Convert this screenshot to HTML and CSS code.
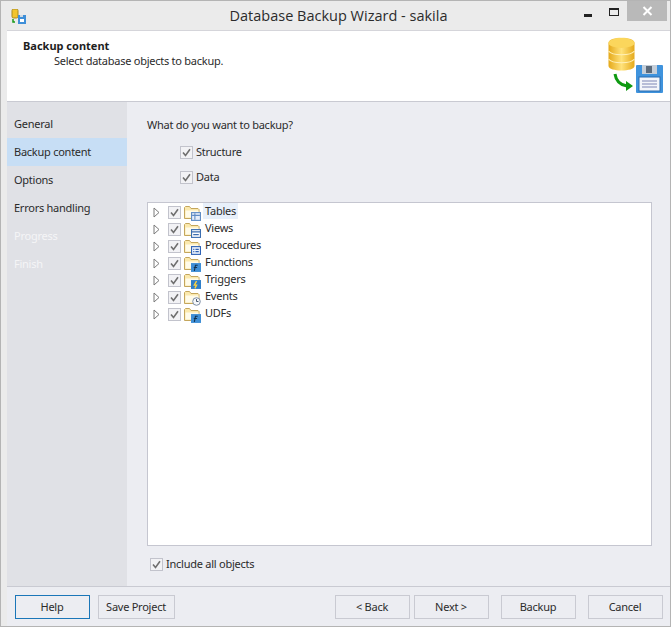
FILE: index.html
```html
<!doctype html>
<html lang="en">
  <head>
    <meta charset="UTF-8" />
    <title>Database Backup Wizard - sakila</title>
    <link rel="stylesheet" href="styles.css">
  </head>
  <body>
    <svg class="defs" width="0" height="0">
      <symbol id="folder" viewBox="0 0 16 16">
        <path d="M.5 13.5v-11l1-1h4l1.500 2h7l1 1v9z" fill="#fbe9ad" stroke="#c4a65c"/>
        <path d="M1.500 5.500h13v7h-13z" fill="#fffbe9"/>
      </symbol>
      <symbol id="check" viewBox="0 0 13 13">
        <rect x=".5" y=".5" width="12" height="12" fill="#f2f2f5" stroke="#c2c3cc"/>
        <path d="M3 6.500l2.500 3L10 3.200" fill="none" stroke="#6f6f6f" stroke-width="1.600"/>
      </symbol>
      <symbol id="arrow" viewBox="0 0 9 11">
        <path d="M2 1v9l5-4.500z" fill="#fff" stroke="#7a7a7a"/>
      </symbol>
    </svg>

    <div class="window">
      <div class="titlebar">
        <svg class="app-icon" width="16" height="16" viewBox="0 0 16 16">
          <rect x="1" y="0" width="6" height="9" rx="1.500" fill="#f2c42c" stroke="#a98a1e"/>
          <path d="M2 10v3h2" fill="none" stroke="#1a9a1a" stroke-width="1.500"/>
          <rect x="7" y="6" width="8" height="9" fill="#3f8fd8"/>
          <rect x="9" y="10" width="4" height="3" fill="#fff"/>
          <rect x="9" y="6" width="3" height="2" fill="#cfd8e0"/>
        </svg>
        <div class="title">Database Backup Wizard - sakila</div>
        <div class="win-buttons">
          <span class="win-min"></span>
          <span class="win-max"></span>
          <span class="win-close">
            <svg width="11" height="10" viewBox="0 0 11 10"><path d="M1.500 1l8 8M9.500 1l-8 8" stroke="#fff" stroke-width="2"/></svg>
          </span>
        </div>
      </div>

      <div class="frame">
        <header class="header">
          <div>
            <h1>Backup content</h1>
            <p>Select database objects to backup.</p>
          </div>
          <svg class="header-icon" width="58" height="58" viewBox="0 0 58 58">
            <defs>
              <linearGradient id="gold" x1="0" x2="1" y1="0" y2="0">
                <stop offset="0" stop-color="#e5a91a"/>
                <stop offset=".5" stop-color="#ffe27a"/>
                <stop offset="1" stop-color="#e5a91a"/>
              </linearGradient>
            </defs>
            <g transform="translate(1.500 0)">
              <path d="M0 6c0-7 26-7 26 0v23c0 6-26 6-26 0z" fill="url(#gold)"/>
              <ellipse cx="13" cy="6" rx="13" ry="5" fill="#fbd65c"/>
              <path d="M0 14c4 5 22 5 26 0M0 22c4 5 22 5 26 0" fill="none" stroke="#fff0b8" stroke-width="1.200"/>
            </g>
            <path d="M8 37c1 7 5 11 12 12" fill="none" stroke="#0f9a12" stroke-width="3"/>
            <path d="M19 44l7 5-7 5z" fill="#0f9a12"/>
            <rect x="29" y="28" width="27" height="28" rx="1" fill="#3f93dd"/>
            <rect x="35" y="28" width="15" height="9" fill="#c5ced8"/>
            <rect x="39" y="29" width="6" height="7" fill="#5c6a7a"/>
            <rect x="32" y="40" width="21" height="14" fill="#f3f5fa" stroke="#2a6db0"/>
            <path d="M35 44h15M35 47h15M35 50h15" stroke="#7d85b5"/>
          </svg>
        </header>

        <div class="body">
          <nav class="sidebar">
            <div class="nav-item">General</div>
            <div class="nav-item active">Backup content</div>
            <div class="nav-item">Options</div>
            <div class="nav-item">Errors handling</div>
            <div class="nav-item disabled">Progress</div>
            <div class="nav-item disabled">Finish</div>
          </nav>

          <main class="content">
            <div class="question">What do you want to backup?</div>
            <div class="options">
              <label class="check"><svg width="13" height="13"><use href="#check"/></svg><span>Structure</span></label>
              <label class="check"><svg width="13" height="13"><use href="#check"/></svg><span>Data</span></label>
            </div>

            <div class="tree">
              <div class="row">
                <svg class="exp" width="9" height="11"><use href="#arrow"/></svg>
                <svg width="13" height="13"><use href="#check"/></svg>
                <span class="node-icon">
                  <svg width="16" height="16"><use href="#folder"/></svg>
                  <svg class="badge" width="10" height="9" viewBox="0 0 9 8"><rect x=".5" y=".5" width="8" height="7" fill="#e6eefa" stroke="#5f8cc4"/><path d="M1 3h7M3.500 1v6" stroke="#5f8cc4"/></svg>
                </span>
                <span class="label selected">Tables</span>
              </div>
              <div class="row">
                <svg class="exp" width="9" height="11"><use href="#arrow"/></svg>
                <svg width="13" height="13"><use href="#check"/></svg>
                <span class="node-icon">
                  <svg width="16" height="16"><use href="#folder"/></svg>
                  <svg class="badge" width="10" height="9" viewBox="0 0 9 8"><rect x=".5" y=".5" width="8" height="7" fill="#fff" stroke="#3b6eb0"/><path d="M.5 2.500h8M2 5h5" stroke="#3b6eb0"/></svg>
                </span>
                <span class="label">Views</span>
              </div>
              <div class="row">
                <svg class="exp" width="9" height="11"><use href="#arrow"/></svg>
                <svg width="13" height="13"><use href="#check"/></svg>
                <span class="node-icon">
                  <svg width="16" height="16"><use href="#folder"/></svg>
                  <svg class="badge" width="10" height="9" viewBox="0 0 9 8"><rect x=".5" y=".5" width="8" height="7" fill="#eef3fb" stroke="#2f62b5"/><path d="M2 3h1M4 3h3M2 5h1M4 5h3" stroke="#2f62b5"/></svg>
                </span>
                <span class="label">Procedures</span>
              </div>
              <div class="row">
                <svg class="exp" width="9" height="11"><use href="#arrow"/></svg>
                <svg width="13" height="13"><use href="#check"/></svg>
                <span class="node-icon">
                  <svg width="16" height="16"><use href="#folder"/></svg>
                  <svg class="badge" width="10" height="9" viewBox="0 0 9 8"><rect width="9" height="8" fill="#3f8fd6"/><path d="M3 7l1-5h2M2.500 4h3" fill="none" stroke="#12324f"/></svg>
                </span>
                <span class="label">Functions</span>
              </div>
              <div class="row">
                <svg class="exp" width="9" height="11"><use href="#arrow"/></svg>
                <svg width="13" height="13"><use href="#check"/></svg>
                <span class="node-icon">
                  <svg width="16" height="16"><use href="#folder"/></svg>
                  <svg class="badge" width="10" height="9" viewBox="0 0 9 8"><rect width="9" height="8" fill="#2f7fc9"/><path d="M5 1L3 4.500h2L3.500 7.500" fill="none" stroke="#ffd23c" stroke-width="1.200"/></svg>
                </span>
                <span class="label">Triggers</span>
              </div>
              <div class="row">
                <svg class="exp" width="9" height="11"><use href="#arrow"/></svg>
                <svg width="13" height="13"><use href="#check"/></svg>
                <span class="node-icon">
                  <svg width="16" height="16"><use href="#folder"/></svg>
                  <svg class="badge" width="9" height="9" viewBox="0 0 9 9"><circle cx="4.500" cy="4.500" r="3.800" fill="#f5f7fa" stroke="#7d8ea5"/><path d="M4.500 2v2.500h2" fill="none" stroke="#4a5a70"/></svg>
                </span>
                <span class="label">Events</span>
              </div>
              <div class="row">
                <svg class="exp" width="9" height="11"><use href="#arrow"/></svg>
                <svg width="13" height="13"><use href="#check"/></svg>
                <span class="node-icon">
                  <svg width="16" height="16"><use href="#folder"/></svg>
                  <svg class="badge" width="10" height="9" viewBox="0 0 9 8"><rect width="9" height="8" fill="#3f8fd6"/><path d="M3 7l1-5h2M2.500 4h3" fill="none" stroke="#12324f"/></svg>
                </span>
                <span class="label">UDFs</span>
              </div>
            </div>

            <label class="check include"><svg width="13" height="13"><use href="#check"/></svg><span>Include all objects</span></label>
          </main>
        </div>

        <footer class="footer">
          <button class="btn default" type="button">Help</button>
          <button class="btn save" type="button">Save Project</button>
          <button class="btn back" type="button">&lt; Back</button>
          <button class="btn next" type="button">Next &gt;</button>
          <button class="btn run" type="button">Backup</button>
          <button class="btn" type="button">Cancel</button>
        </footer>
      </div>
    </div>
  </body>
</html>
```

FILE: styles.css
```css
* {
  box-sizing: border-box;
}

html,
body {
  margin: 0;
  height: 100%;
}

body {
  font-family: "Noto Sans", sans-serif;
  font-size: 11px;
  letter-spacing: -0.25px;
  color: #2b2b2b;
  overflow: hidden;
}

.defs {
  display: block;
  height: 0;
}

.window {
  display: flex;
  flex-direction: column;
  width: 671px;
  height: 627px;
  border: 1px solid #b4b4b4;
  background: #ebebeb;
}

.titlebar {
  position: relative;
  display: flex;
  align-items: flex-start;
  height: 29px;
  flex: none;
}

.app-icon {
  margin: 8px 0 0 10px;
}

.title {
  position: absolute;
  left: 6px;
  right: 0;
  top: 5px;
  text-align: center;
  font-family: "Open Sans", sans-serif;
  font-size: 14.5px;
  letter-spacing: 0;
  color: #2b2b2b;
}

.win-buttons {
  display: flex;
  align-items: flex-start;
  margin-left: auto;
  margin-right: 3px;
}

.win-min {
  width: 8px;
  height: 3px;
  margin: 13px 17px 0 0;
  background: #222;
}

.win-max {
  width: 10px;
  height: 8px;
  margin: 7px 8px 0 0;
  border: 1px solid #222;
  border-top-width: 2px;
}

.win-close {
  display: flex;
  align-items: center;
  justify-content: center;
  width: 40px;
  height: 20px;
  background: #b9b9b9;
}

.frame {
  flex: 1;
  display: flex;
  flex-direction: column;
  min-height: 0;
  margin-left: 6px;
  background: #ecedf2;
}

.header {
  display: flex;
  justify-content: space-between;
  height: 72px;
  flex: none;
  padding: 7px 5px 0 16px;
  background: #fff;
  border-top: 1px solid #d5d5da;
  border-bottom: 1px solid #c9cad2;
}

.header h1 {
  margin: 0;
  font-size: 11px;
  font-weight: bold;
  letter-spacing: 0;
  color: #1e1e1e;
}

.header p {
  margin: 0 0 0 31px;
}

.header-icon {
  margin-top: -1px;
}

.body {
  flex: 1;
  display: flex;
  min-height: 0;
}

.sidebar {
  width: 120px;
  flex: none;
  padding-top: 8px;
  background: #e0e1e6;
}

.nav-item {
  height: 28px;
  padding-left: 7px;
  line-height: 28px;
}

.nav-item.active {
  background: #c7def5;
}

.nav-item.disabled {
  color: #f5f5f7;
}

.content {
  flex: 1;
  display: flex;
  flex-direction: column;
  padding: 15px 18px 0 20px;
}

.question {
  height: 27px;
}

.options {
  display: flex;
  flex-direction: column;
  gap: 9px;
  margin-left: 33px;
}

.check {
  display: flex;
  align-items: center;
  gap: 3px;
  height: 16px;
}

.check span {
  margin-bottom: 2px;
}

.tree {
  height: 344px;
  margin-top: 17px;
  padding-top: 1px;
  background: #fff;
  border: 1px solid #c5c6d0;
}

.row {
  display: flex;
  align-items: center;
  height: 17px;
  padding-left: 4px;
}

.exp {
  margin-right: 7px;
}

.node-icon {
  position: relative;
  width: 16px;
  height: 16px;
  margin-left: 3px;
}

.node-icon > svg:first-child {
  display: block;
}

.badge {
  position: absolute;
  right: -1px;
  bottom: 0;
}

.label {
  margin: 0 0 4px 3px;
  padding: 0 2px;
  line-height: 16px;
}

.label.selected {
  background: #e8f0fa;
}

.include {
  margin: 10px 0 0 3px;
}

.footer {
  display: flex;
  height: 40px;
  flex: none;
  padding: 8px 7px 0 8px;
  border-top: 1px solid #c9cad2;
}

.btn {
  width: 75px;
  height: 24px;
  padding: 0 1px 2px 0;
  font: inherit;
  letter-spacing: inherit;
  color: inherit;
  background: #ecedf2;
  border: 1px solid #c9cad2;
}

.btn.default {
  border-color: #1a76b8;
}

.btn.save {
  width: 77px;
  margin-left: 8px;
}

.btn.back {
  margin-left: auto;
}

.btn.next {
  margin-left: 4px;
}

.btn.run {
  margin-left: 12px;
  margin-right: 12px;
}
```
